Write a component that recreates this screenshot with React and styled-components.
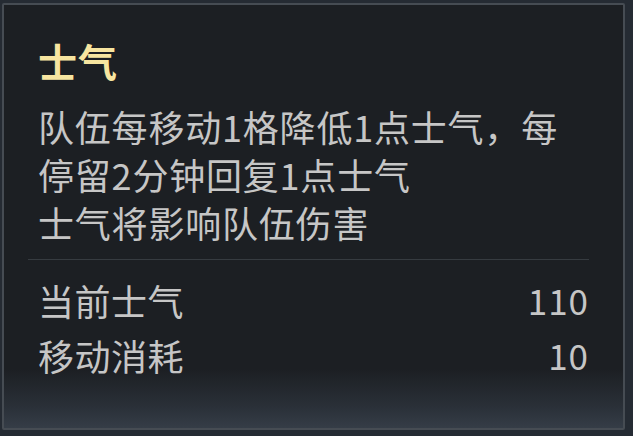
import React from 'react';
import styled, { createGlobalStyle } from 'styled-components';

const GlobalStyle = createGlobalStyle`
  html, body {
    margin: 0;
    padding: 0;
    background: #252b33;
  }
  body {
    width: 633px;
    height: 436px;
    overflow: hidden;
    font-family: "Noto Sans CJK SC", "Noto Sans", sans-serif;
  }
`;

const Panel = styled.section`
  box-sizing: border-box;
  width: 623px;
  height: 427px;
  margin: 3px 0 0 2px;
  border: 2px solid #464c53;
  border-radius: 2px;
  background: linear-gradient(
    to bottom,
    #1c1f23 0%,
    #1c1f23 86%,
    #2a3038 95%,
    #353d47 100%
  );
  padding: 31px 34px 0 34px;
`;

const Title = styled.h2`
  margin: 0;
  font-size: 39px;
  line-height: 48px;
  font-weight: 700;
  letter-spacing: 1px;
  color: #f7e5a0;
`;

const Desc = styled.div`
  margin-top: 18px;
  font-size: 36px;
  line-height: 48px;
  letter-spacing: 0.8px;
  color: #c6c6c6;
`;

const Divider = styled.hr`
  margin: 13px 0 0 -10px;
  border: none;
  height: 1px;
  background: #363b40;
`;

const Stats = styled.div`
  margin-top: 12px;
  display: flex;
  flex-direction: column;
`;

const StatRow = styled.div`
  display: flex;
  justify-content: space-between;
  align-items: center;
  height: 55px;
  font-size: 36px;
  letter-spacing: 0.5px;
  color: #c6c6c6;
`;

const Value = styled.span`
  letter-spacing: 1px;
  font-size: 35px;
`;

const stats = [
  { label: '当前士气', value: '110' },
  { label: '移动消耗', value: '10' },
];

export default function App() {
  return (
    <>
      <GlobalStyle />
      <Panel>
        <Title>士气</Title>
        <Desc>
          队伍每移动1格降低1点士气，每
          <br />
          停留2分钟回复1点士气
          <br />
          士气将影响队伍伤害
        </Desc>
        <Divider />
        <Stats>
          {stats.map((s) => (
            <StatRow key={s.label}>
              <span>{s.label}</span>
              <Value>{s.value}</Value>
            </StatRow>
          ))}
        </Stats>
      </Panel>
    </>
  );
}
